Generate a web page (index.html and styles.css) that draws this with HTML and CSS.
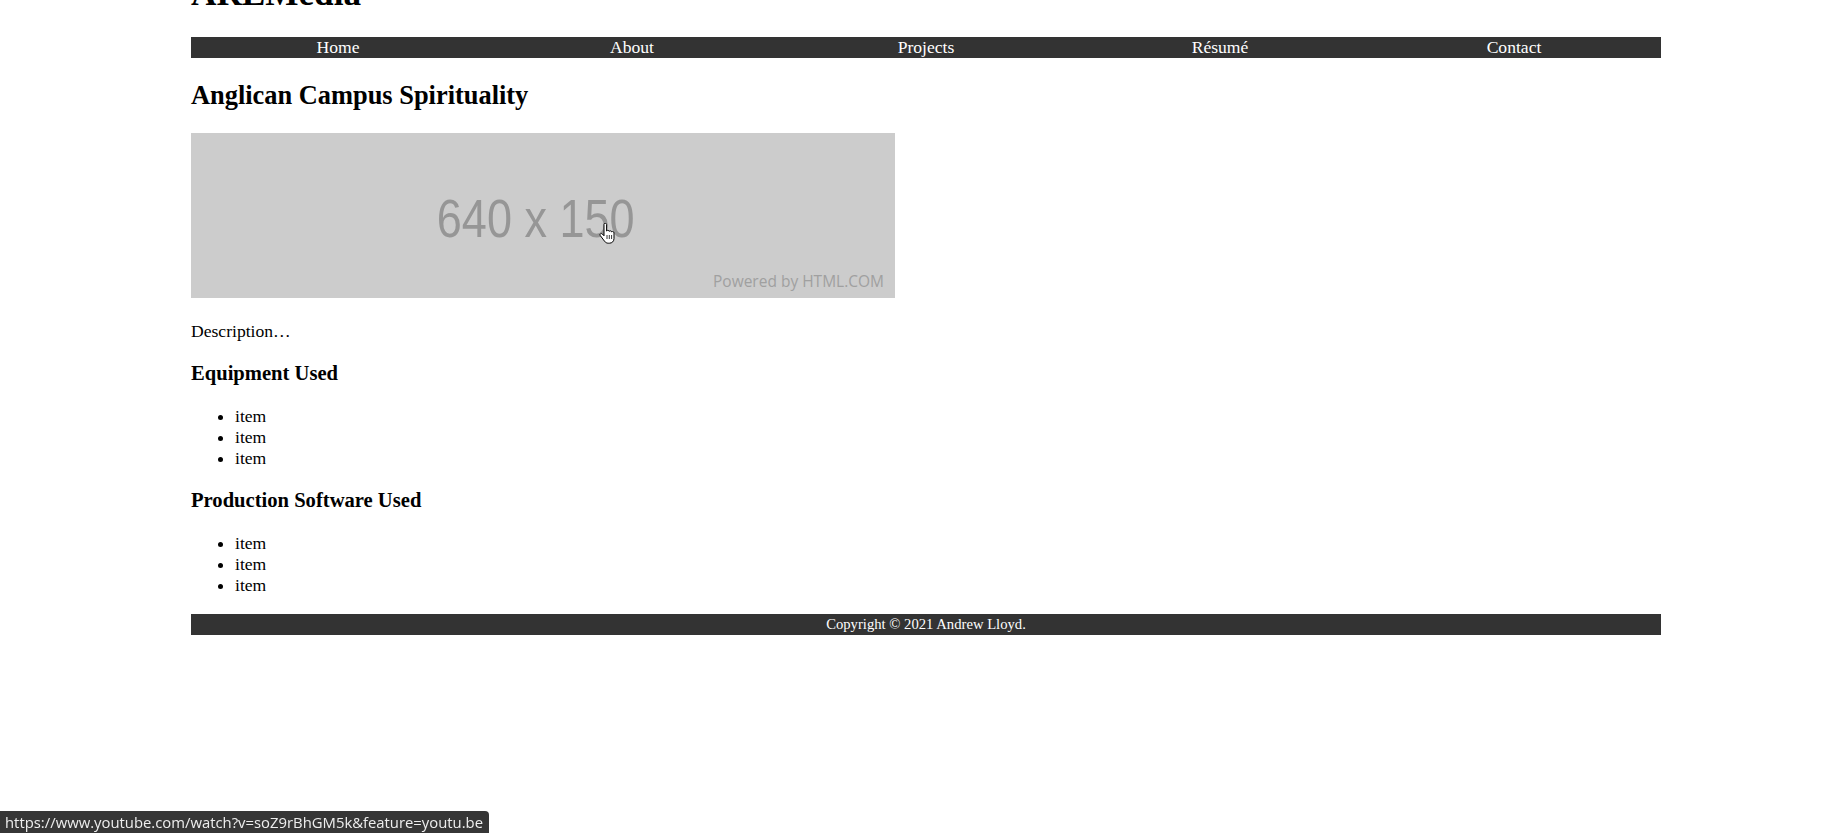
FILE: index.html
```html
<!DOCTYPE html>
<html lang="en">
<head>
<meta charset="utf-8">
<title>Anglican Campus Spirituality - ARLMedia</title>
<link rel="stylesheet" href="styles.css">
</head>
<body>
<div class="page">
  <header class="site-header">
    <h1 class="site-title">ARLMedia</h1>
    <nav class="nav">
      <a class="nav-link" href="#">Home</a>
      <a class="nav-link" href="#">About</a>
      <a class="nav-link" href="#">Projects</a>
      <a class="nav-link" href="#">Résumé</a>
      <a class="nav-link" href="#">Contact</a>
    </nav>
  </header>
  <main class="content">
    <h2 class="project-title">Anglican Campus Spirituality</h2>
    <div class="placeholder">
      <span class="placeholder-size">640 x 150</span>
      <span class="placeholder-credit">Powered by HTML.COM</span>
      <svg class="cursor" width="16" height="22" viewBox="0 0 16 22">
        <path d="M5 1.5c0-.8.6-1.3 1.3-1.3S7.6.7 7.6 1.5V8c.3-.5.8-.7 1.3-.7.7 0 1.2.5 1.3 1.1.3-.4.7-.6 1.2-.6.7 0 1.2.5 1.3 1.1.3-.3.6-.4 1-.4.8 0 1.3.6 1.3 1.4v5.6c0 2.7-1.9 4.7-4.6 4.7H9.3c-1.6 0-2.8-.7-3.7-1.9L1.3 12.6c-.5-.6-.4-1.4.2-1.8.6-.4 1.3-.3 1.8.2L5 12.8V1.5z" fill="#fff" stroke="#000" stroke-width="1"/>
        <path d="M8 12v4M10.3 12v4M12.6 12v4" stroke="#000" stroke-width=".8"/>
      </svg>
    </div>
    <p class="description">Description…</p>
    <h3 class="section-title">Equipment Used</h3>
    <ul class="list">
      <li>item</li>
      <li>item</li>
      <li>item</li>
    </ul>
    <h3 class="section-title">Production Software Used</h3>
    <ul class="list">
      <li>item</li>
      <li>item</li>
      <li>item</li>
    </ul>
  </main>
  <footer class="footer">Copyright © 2021 Andrew Lloyd.</footer>
</div>
<div class="status-bar">https://www.youtube.com/watch?v=soZ9rBhGM5k&amp;feature=youtu.be</div>
</body>
</html>
```
FILE: styles.css
```css
html, body {
  margin: 0;
  padding: 0;
  background: #fff;
}

body {
  font-family: "Liberation Serif", "Times New Roman", serif;
  font-size: 17.6px;
  color: #000;
}

.page {
  margin-left: 191px;
  width: 1470px;
}

.site-title {
  font-size: 35.2px;
  font-weight: bold;
  margin: -26px 0 23px;
}

.nav {
  display: flex;
  background: #333;
  height: 21px;
}

.nav-link {
  flex: 1;
  text-align: center;
  color: #fff;
  text-decoration: none;
  line-height: 21px;
}

.content {
  display: flow-root;
}

.project-title {
  font-size: 26.4px;
  font-weight: bold;
  margin: 22px 0 22px;
}

.placeholder {
  position: relative;
  width: 704px;
  height: 165px;
  background: #ccc;
  display: flex;
  justify-content: center;
  align-items: center;
  margin-bottom: 23px;
}

.placeholder-size {
  display: inline-block;
  font-family: "Liberation Sans", Arial, sans-serif;
  font-size: 53.6px;
  color: #969696;
  transform: scaleX(0.84);
  margin-left: -14px;
  margin-top: 4px;
}

.placeholder-credit {
  position: absolute;
  right: 11px;
  bottom: 6px;
  font-family: "Open Sans", "Liberation Sans", sans-serif;
  font-size: 15.5px;
  color: #a0a0a0;
}

.cursor {
  position: absolute;
  left: 408px;
  top: 90px;
}

.description {
  margin: 0 0 19.6px;
}

.section-title {
  font-size: 20.6px;
  font-weight: bold;
  margin: 19.6px 0 21px;
}

.list {
  margin: 17.6px 0 20.8px;
  padding-left: 44px;
}

.list:last-child {
  margin-bottom: 17.6px;
}

.footer {
  background: #333;
  color: #fff;
  text-align: center;
  font-size: 14.67px;
  height: 21px;
  line-height: 21px;
}

.status-bar {
  position: fixed;
  left: 0;
  bottom: 0;
  height: 22px;
  padding: 0 6px 0 5px;
  background: #363636;
  color: #eee;
  font-family: "Open Sans", "DejaVu Sans", sans-serif;
  font-size: 14.85px;
  line-height: 22px;
  border-top-right-radius: 4px;
}
```
